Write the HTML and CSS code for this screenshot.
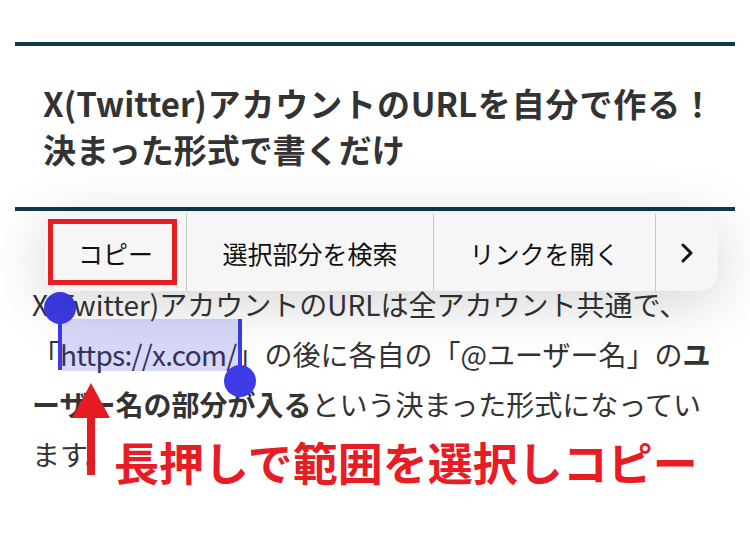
FILE: index.html
```html
<!DOCTYPE html>
<html lang="ja">
<head>
<meta charset="utf-8">
<title>X(Twitter)アカウントのURL</title>
<link rel="stylesheet" href="styles.css">
</head>
<body>
<main class="page">
  <div class="title-box">
    <h1 class="title">X(Twitter)アカウントのURLを自分で作る！決まった形式で書くだけ</h1>
  </div>
  <p class="body-text">X(Twitter)アカウントのURLは全アカウント共通で、「<span class="url">https://x.com/</span>」の後に各自の「@ユーザー名」の<strong>ユーザー名の部分が入る</strong>という決まった形式になっています。</p>

  <div class="sel-hl"></div>
  <div class="handle-bar handle-bar-start"></div>
  <div class="handle-dot handle-dot-start"></div>
  <div class="handle-bar handle-bar-end"></div>
  <div class="handle-dot handle-dot-end"></div>

  <div class="popup">
    <div class="pm-item pm-copy">コピー<span class="red-box"></span></div>
    <div class="pm-item pm-search">選択部分を検索</div>
    <div class="pm-item pm-link">リンクを開く</div>
    <div class="pm-item pm-more">
      <svg class="chev" width="14" height="22" viewBox="0 0 14 22"><polyline points="3,3 11,11 3,19" fill="none" stroke="#111" stroke-width="3" stroke-linecap="round" stroke-linejoin="round"/></svg>
    </div>
  </div>

  <svg class="arrow" width="42" height="100" viewBox="0 0 42 100">
    <polygon points="21,3 2,38 40,38" fill="#e51b23"/>
    <rect x="17" y="37" width="8" height="58" fill="#e51b23"/>
  </svg>
  <div class="note">長押しで範囲を選択しコピー</div>
</main>
</body>
</html>
```
FILE: styles.css
```css
* { box-sizing: border-box; }
html, body { margin: 0; padding: 0; background: #fff; }
.page {
  position: relative;
  width: 750px;
  height: 535px;
  overflow: hidden;
  font-family: "Noto Sans CJK JP", "Noto Sans", sans-serif;
  color: #333;
}
.title-box {
  margin: 42px 15px 0;
  border-top: 4px solid #0e3a4a;
  border-bottom: 4px solid #0e3a4a;
  padding: 34px 21px 35px 28px;
}
.title {
  margin: 0;
  font-size: 33px;
  font-weight: 700;
  line-height: 46px;
  letter-spacing: 0;
  text-align: justify;
  color: #333;
}
.body-text {
  margin: 68px 26px 0 32px;
  font-size: 28px;
  line-height: 50px;
  letter-spacing: 0;
  line-break: normal;
  color: #333;
}
.body-text strong { font-weight: 700; }
.url { letter-spacing: -0.7px; }

.sel-hl {
  position: absolute;
  left: 62px; top: 319px;
  width: 176px; height: 52px;
  background: rgba(62, 60, 228, 0.2);
}
.handle-bar {
  position: absolute;
  width: 4px;
  background: #3d3be6;
}
.handle-bar-start { left: 58px; top: 300px; height: 70px; }
.handle-bar-end { left: 238px; top: 319px; height: 60px; }
.handle-dot {
  position: absolute;
  width: 32px; height: 32px;
  border-radius: 50%;
  background: #3d3be6;
}
.handle-dot-start { left: 44px; top: 292px; }
.handle-dot-end { left: 224px; top: 365px; }

.popup {
  position: absolute;
  left: 45px; top: 214px;
  width: 673px; height: 77px;
  display: flex;
  background: #f6f6f6;
  border-radius: 18px;
  box-shadow: 0 10px 60px rgba(0, 0, 0, 0.18);
  color: #111;
  font-size: 25px;
}
.pm-item {
  position: relative;
  display: flex;
  align-items: center;
  justify-content: center;
  border-left: 1px solid #c8c8c8;
}
.pm-copy { width: 141px; border-left: none; }
.pm-search { width: 247px; }
.pm-link { width: 222px; }
.pm-more { width: 63px; }
.red-box {
  position: absolute;
  left: 3px; top: 5px;
  width: 129px; height: 66px;
  border: 5px solid #e51d24;
}
.arrow {
  position: absolute;
  left: 70px; top: 380px;
}
.note {
  position: absolute;
  left: 114px; top: 436px;
  font-size: 45px;
  line-height: 52px;
  font-weight: 700;
  color: #e81c25;
  white-space: nowrap;
}
```
